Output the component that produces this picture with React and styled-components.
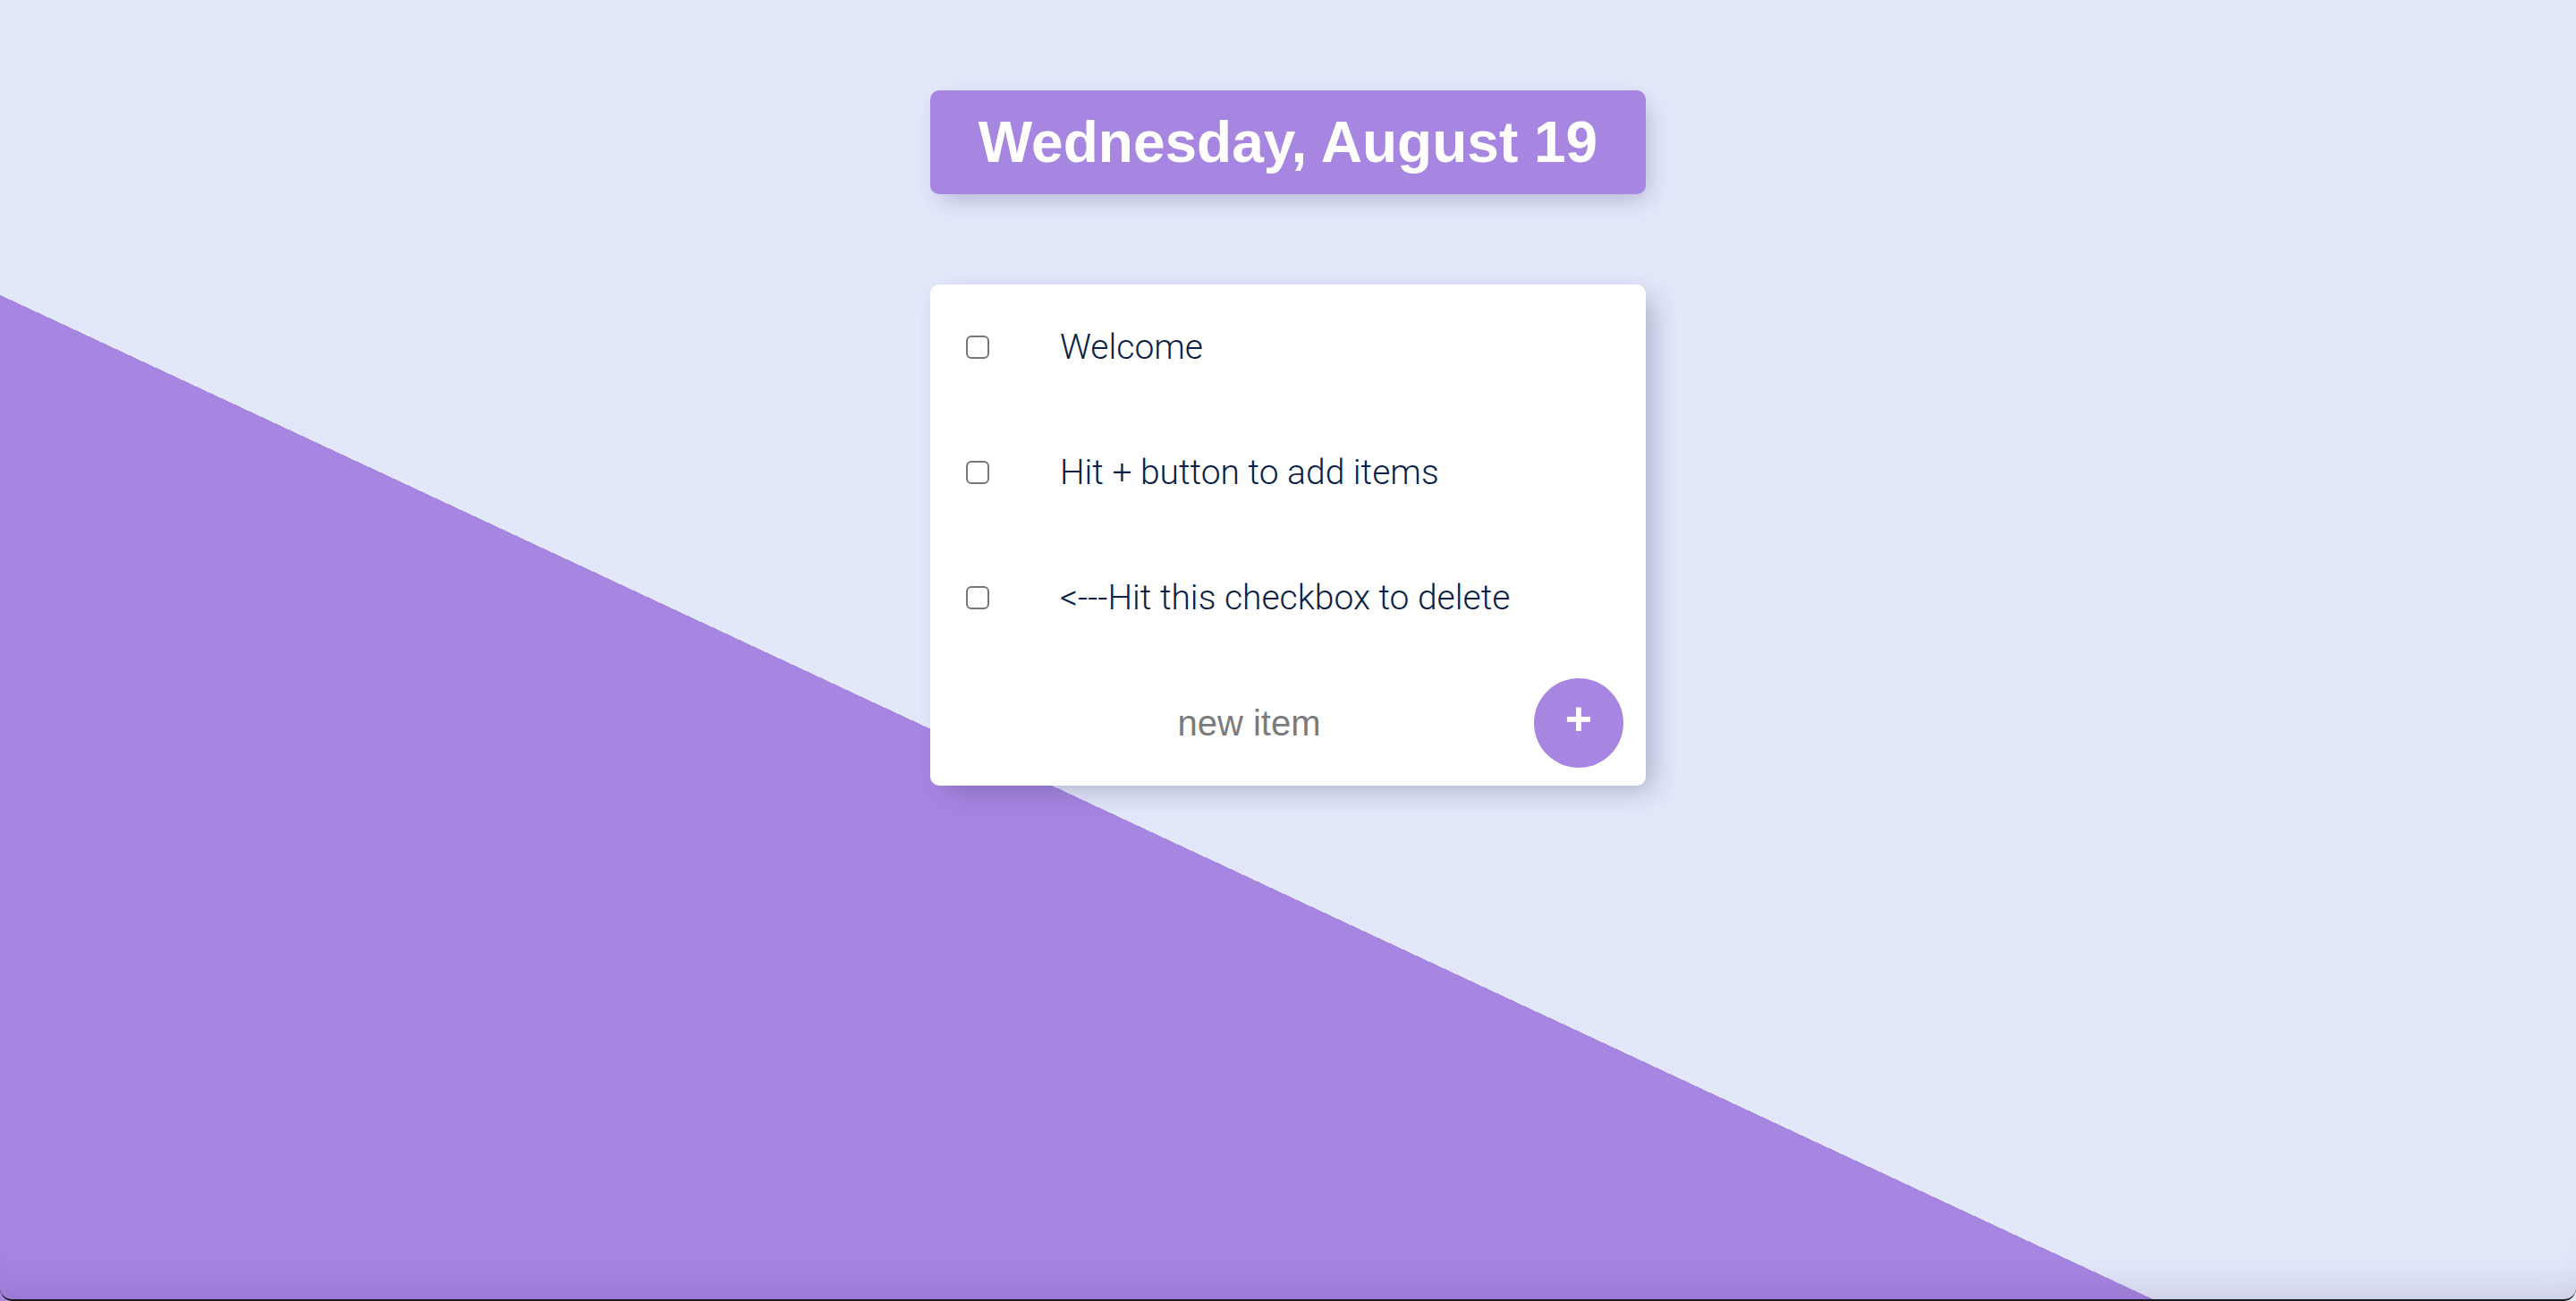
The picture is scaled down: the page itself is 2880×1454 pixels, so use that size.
import React, { useState } from 'react';
import styled, { createGlobalStyle } from 'styled-components';

const GlobalStyle = createGlobalStyle`
  html, body {
    margin: 0;
    padding: 0;
  }
  body {
    font-family: "Liberation Sans", Arial, sans-serif;
    overflow: hidden;
  }
`;

export default function App() {
    const [Items, setItems] = useState(["Welcome", "Hit + button to add items", "<---Hit this checkbox to delete"]);
    const [NewItem, setNewItem] = useState("");

    const handleAdd = () => {
        if (!NewItem.trim()) return;
        setItems([...Items, NewItem]);
        setNewItem("");
    }

    const handleDelete = (idx) => {
        setItems(Items.filter((_, i) => i !== idx));
    }

    return (<Page>
        <GlobalStyle />
        <Heading>Wednesday, August 19</Heading>
        <Card>
            {Items.map((item, idx) => (
                <ItemRow key={idx}>
                    <Check type="checkbox" onChange={() => handleDelete(idx)} />
                    <ItemText>{item}</ItemText>
                </ItemRow>
            ))}
            <FormRow onSubmit={(e) => { e.preventDefault(); handleAdd(); }}>
                <NewInput
                    type="text"
                    placeholder="new item"
                    value={NewItem}
                    onChange={(e) => setNewItem(e.target.value)}
                />
                <AddButton type="submit">+</AddButton>
            </FormRow>
        </Card>
        <BottomEdge />
    </Page>
    )
}

const Page = styled.div`
  position: relative;
  display: flex;
  flex-direction: column;
  align-items: center;
  height: 100vh;
  box-sizing: border-box;
  padding-top: 101px;
  background: linear-gradient(25deg, #a786e2 40.2%, #e2e7fa 40.2%);
`;

const Heading = styled.h1`
  width: 800px;
  height: 116px;
  margin: 0 0 101px 0;
  display: flex;
  justify-content: center;
  align-items: center;
  background: #a786e2;
  border-radius: 10px;
  color: #ffffff;
  font-family: "Liberation Sans", Arial, sans-serif;
  font-weight: 700;
  font-size: 64px;
  box-shadow: 6px 10px 26px -6px rgba(40, 40, 90, 0.28);
`;

const Card = styled.div`
  width: 800px;
  background: #ffffff;
  border-radius: 10px;
  box-shadow: 12px 10px 30px -6px rgba(40, 40, 90, 0.3);
  display: flex;
  flex-direction: column;
`;

const ItemRow = styled.div`
  height: 140px;
  display: flex;
  align-items: center;
  padding-left: 40px;
  gap: 79px;
`;

const Check = styled.input`
  appearance: none;
  margin: 0;
  width: 26px;
  height: 26px;
  flex-shrink: 0;
  border: 2px solid #777777;
  border-radius: 6px;
  background: #ffffff;
  box-sizing: border-box;
  cursor: pointer;
`;

const ItemText = styled.p`
  margin: 0;
  font-family: Roboto, "Liberation Sans", Arial, sans-serif;
  font-weight: 300;
  font-size: 39px;
  color: #0a1f47;
  white-space: nowrap;
`;

const FormRow = styled.form`
  height: 140px;
  display: flex;
  align-items: center;
  padding: 0 25px 0 40px;
  gap: 2px;
  margin: 0;
`;

const NewInput = styled.input`
  flex: 1;
  min-width: 0;
  border: none;
  outline: none;
  background: transparent;
  text-align: center;
  font-family: "Liberation Sans", Arial, sans-serif;
  font-size: 40px;
  color: #333333;

  &::placeholder {
    color: #7b7b7b;
  }
`;

const AddButton = styled.button`
  width: 100px;
  height: 100px;
  flex-shrink: 0;
  border: none;
  border-radius: 50%;
  background: #a786e2;
  color: #ffffff;
  font-family: "Liberation Sans", Arial, sans-serif;
  font-size: 52px;
  font-weight: 700;
  line-height: 1;
  padding: 0 0 10px 0;
  display: flex;
  justify-content: center;
  align-items: center;
  cursor: pointer;
`;

const BottomEdge = styled.div`
  position: absolute;
  left: 0;
  right: 0;
  bottom: 0;
  height: 70px;
  pointer-events: none;
  border-bottom: 2px solid #1a1a1a;
  border-radius: 0 0 14px 14px;
  box-shadow: inset 0 -40px 40px -30px rgba(50, 30, 90, 0.14);
`;
